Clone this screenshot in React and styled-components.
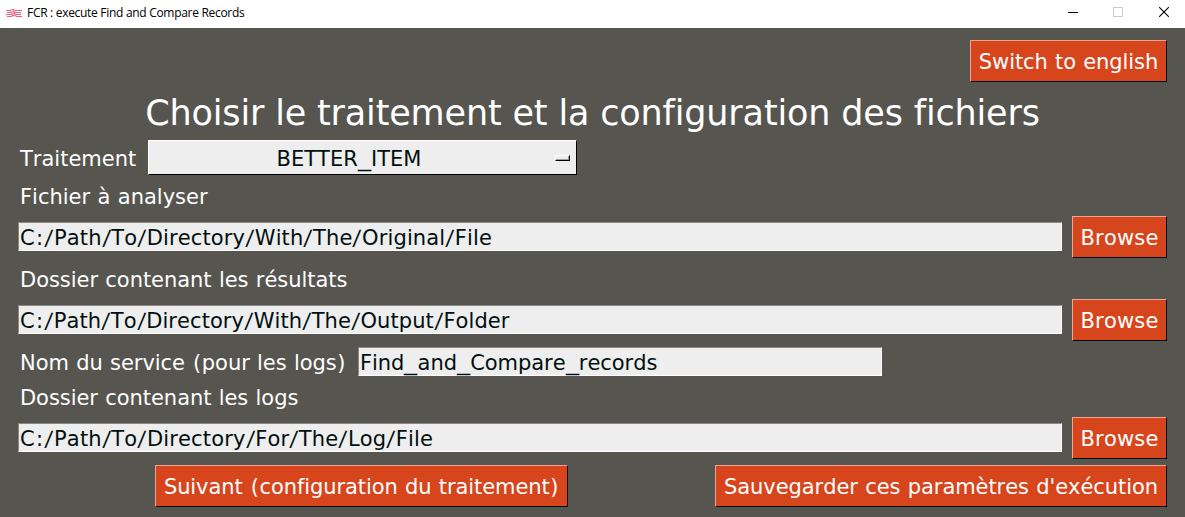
import React from 'react';
import styled, { createGlobalStyle } from 'styled-components';

const GlobalStyle = createGlobalStyle`
  *, *::before, *::after { box-sizing: border-box; }
  body { margin: 0; background: #565550; }
`;

const Window = styled.div`
  display: flex;
  flex-direction: column;
  width: 1185px;
  height: 517px;
  overflow: hidden;
  background: #565550;
  color: #fff;
  font-family: "DejaVu Sans", Verdana, sans-serif;
  font-size: 21px;
  line-height: 26px;
  font-kerning: none;
  white-space: nowrap;
`;

const TitleBar = styled.header`
  display: flex;
  align-items: center;
  flex: none;
  height: 28px;
  padding: 0 16px 3px 6px;
  background: #fff;
  color: #000;
`;

const WindowTitle = styled.span`
  flex: 1;
  margin-left: 5px;
  font: 12px/16px "Open Sans", "Segoe UI", sans-serif;
  letter-spacing: -0.3px;
`;

const WindowControls = styled.div`
  display: flex;
  gap: 35px;
  padding-bottom: 1px;
  svg { display: block; }
  svg:last-child { margin-left: 1px; }
`;

const Content = styled.main`
  display: flex;
  flex-direction: column;
  padding: 12px 18px 0;
`;

const Row = styled.div`
  display: flex;
  flex: none;
  align-items: flex-start;
  justify-content: ${(p) => p.$justify || 'flex-start'};
  height: ${(p) => p.$height}px;
  padding-left: ${(p) => p.$indent || 0}px;
`;

const Heading = styled.h1`
  flex: none;
  height: 58px;
  margin: 0;
  padding-top: 10px;
  font-size: 35px;
  font-weight: 400;
  line-height: 42px;
  letter-spacing: -0.16px;
  text-align: center;
`;

const Label = styled.label`
  padding: ${(p) => p.$top}px 0 0 2px;
  width: ${(p) => (p.$width ? `${p.$width}px` : 'auto')};
  letter-spacing: ${(p) => p.$tracking || 0}px;
  word-spacing: 0.7px;
`;

const Button = styled.button`
  flex: none;
  width: ${(p) => p.$width}px;
  height: 42px;
  padding: 2px 0 0;
  border: 1px solid;
  border-color: #f0a592 #000 #000 #f0a592;
  border-radius: 0;
  background: #d7451d;
  color: inherit;
  font: inherit;
  font-kerning: none;
  letter-spacing: ${(p) => p.$tracking || 0}px;
  word-spacing: 0.7px;
  text-align: center;
`;

const Entry = styled.div`
  flex: none;
  width: ${(p) => p.$width}px;
  height: 29px;
  margin-top: 6px;
  padding: 1px 0 0 1px;
  border: 1px solid;
  border-color: #8a8986 #fff #fff #8a8986;
  background: #eee;
  color: #00100f;
  line-height: 28px;
  letter-spacing: ${(p) => p.$tracking || 0}px;
`;

const Wide = styled.span`
  display: inline-block;
  padding: 0 ${(p) => p.$pad}px;
  transform: ${(p) => p.$shape || 'none'};
`;

const Select = styled.div`
  display: flex;
  align-items: center;
  width: 429px;
  height: 35px;
  padding-right: 6px;
  border: 1px solid;
  border-color: #fff #000 #000 #fff;
  background: #eee;
  color: #00100f;
`;

const SelectValue = styled.span`
  flex: 1;
  padding: 2px 6px 0 0;
  text-align: center;
`;

const SelectIndicator = styled.span`
  width: 15px;
  height: 6px;
  border: 1px solid;
  border-color: #fff #000 #000 #fff;
  box-shadow: inset -1px -1px 0 #a0a0a0;
`;

const PAD = { '/': 1.2, ':': 1.2, _: 1.4, '(': 0.7, ')': 0.7 };
const SHAPE = { '/': 'skewX(-6deg)', _: 'scaleX(1.25)' };

function Spaced({ text }) {
  return text.split(/([/:_()])/).filter(Boolean).map((part, i) => (
    PAD[part] ? <Wide key={i} $pad={PAD[part]} $shape={SHAPE[part]}>{part}</Wide> : part
  ));
}

function Logo() {
  return (
    <svg width="16" height="10" viewBox="0 0 16 10" fill="none" stroke="#e8506f" strokeWidth="1" opacity="0.9">
      <path d="M0 2.5h4l3-1 3 1h6M1 4.5h4l2-1 3 1h5M0 6.5h5l3-1 2 1h5M1 8.5h4l3-1 3 1h5" />
      <path d="M4 2l3 6M10 2L6 8M7 1l3 7" strokeOpacity="0.6" />
    </svg>
  );
}

function PathRow({ value, tracking, height = 42 }) {
  return (
    <Row $height={height} $justify="space-between">
      <Entry $width={1044} $tracking={tracking}><Spaced text={value} /></Entry>
      <Button $width={95} $tracking={0.2}>Browse</Button>
    </Row>
  );
}

export default function App() {
  return (
    <Window>
      <GlobalStyle />
      <TitleBar>
        <Logo />
        <WindowTitle>FCR : execute Find and Compare Records</WindowTitle>
        <WindowControls>
          <svg width="10" height="10" stroke="#000" shapeRendering="crispEdges"><path d="M0 5.5h10" /></svg>
          <svg width="10" height="10" stroke="#ccc" fill="none" shapeRendering="crispEdges"><path d="M.5 .5h9v9h-9z" /></svg>
          <svg width="10" height="10" stroke="#000" strokeWidth="1.1"><path d="M0 0l10 10M10 0L0 10" /></svg>
        </WindowControls>
      </TitleBar>
      <Content>
        <Row $height={42} $justify="flex-end">
          <Button $width={197} $tracking={-0.08}>Switch to english</Button>
        </Row>
        <Heading>Choisir le traitement et la configuration des fichiers</Heading>
        <Row $height={35}>
          <Label $top={6} $width={130}>Traitement</Label>
          <Select>
            <SelectValue><Spaced text="BETTER_ITEM" /></SelectValue>
            <SelectIndicator />
          </Select>
        </Row>
        <Row $height={41}>
          <Label $top={9}>Fichier à analyser</Label>
        </Row>
        <PathRow value="C:/Path/To/Directory/With/The/Original/File" tracking={0.13} />
        <Row $height={41}>
          <Label $top={9} $tracking={-0.04}>Dossier contenant les résultats</Label>
        </Row>
        <PathRow value="C:/Path/To/Directory/With/The/Output/Folder" tracking={0.08} />
        <Row $height={42}>
          <Label $top={9} $width={340} $tracking={-0.05}><Spaced text="Nom du service (pour les logs)" /></Label>
          <Entry $width={524} $tracking={-0.05}><Spaced text="Find_and_Compare_records" /></Entry>
        </Row>
        <Row $height={34}>
          <Label $top={2} $tracking={-0.05}>Dossier contenant les logs</Label>
        </Row>
        <PathRow value="C:/Path/To/Directory/For/The/Log/File" tracking={0.15} height={48} />
        <Row $height={42} $indent={137} $justify="space-between">
          <Button $width={413} $tracking={-0.08}><Spaced text="Suivant (configuration du traitement)" /></Button>
          <Button $width={452} $tracking={-0.06}>Sauvegarder ces paramètres d'exécution</Button>
        </Row>
      </Content>
    </Window>
  );
}
